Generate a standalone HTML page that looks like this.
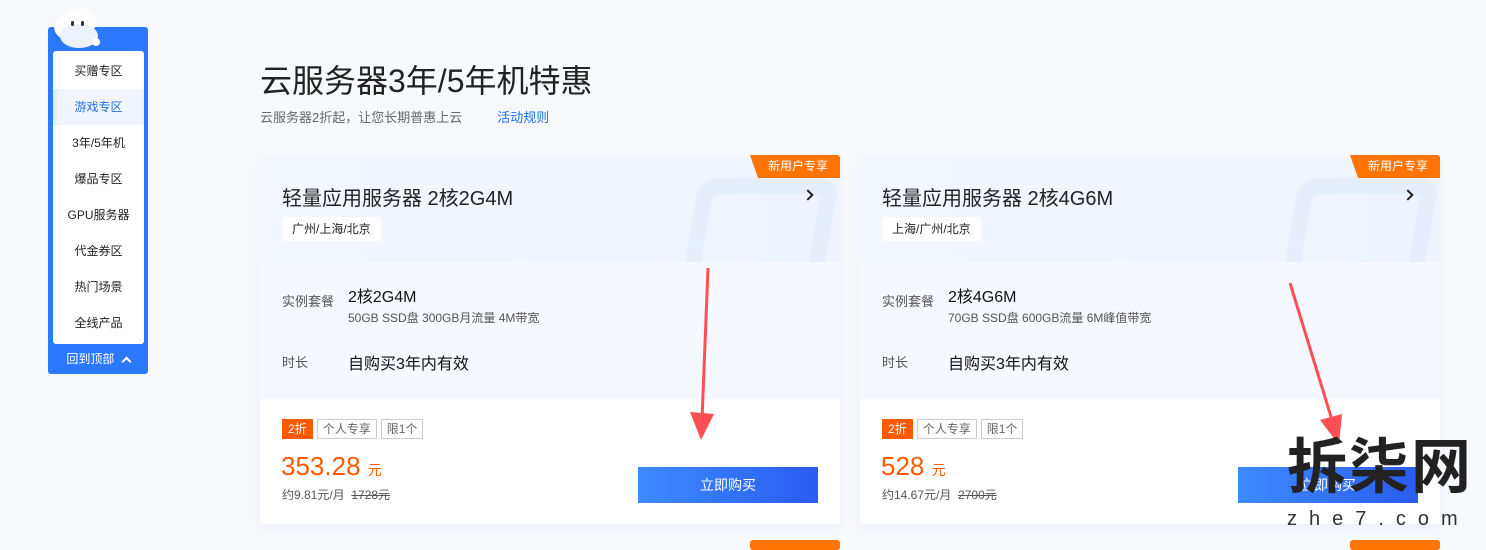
<!DOCTYPE html>
<html><head><meta charset="utf-8"><style>
*{margin:0;padding:0;box-sizing:border-box}
body{width:1486px;height:545px;overflow:hidden;background:#f7f9fd;font-family:"Liberation Sans","Noto Sans CJK SC",sans-serif;position:relative;color:#000}
.abs{position:absolute}
.side{left:48px;top:27px;width:100px;height:347px;background:#2a79ff;border-radius:3px}
.inner{left:5px;top:24px;width:91px;height:293px;background:#fff;border-radius:3px}
.it{position:absolute;left:0;width:91px;height:36px;line-height:36px;text-align:center;font-size:12px;color:#222}
.card{width:580px;height:364px;background:#fff;top:160px;box-shadow:0 2px 8px rgba(30,60,120,.05)}
.top{left:0;top:0;width:580px;height:102px;background:linear-gradient(90deg,#f2f6fe,#eef3fd);overflow:hidden}
.mid{left:0;top:102px;width:580px;height:137px;background:#f5f8fe}
.badge{top:-5px;right:0;width:90px;height:23px;background:#ff7405;color:#fff;font-size:12px;line-height:23px;text-align:center;clip-path:polygon(0 0,100% 0,100% 100%,8px 100%);padding-left:6px;border-radius:0 3px 0 0}
.tag{font-size:12px;height:20px;line-height:18px;padding:0 5px;border:1px solid #c8ccd4;color:#666;display:inline-block;margin-right:4px}
.btn{left:378px;top:307px;width:180px;height:36px;background:linear-gradient(90deg,#3d8bff,#2a5cf0);color:#fff;font-size:14px;line-height:36px;text-align:center}
</style></head><body>
<div class="abs side">
 <div class="abs inner">
  <div class="it" style="top:2px">买赠专区</div>
  <div class="it" style="top:38px;background:linear-gradient(90deg,#dce8ff 0,#f0f5ff 6px);color:#1f6fe6">游戏专区</div>
  <div class="it" style="top:74px">3年/5年机</div>
  <div class="it" style="top:110px">爆品专区</div>
  <div class="it" style="top:146px">GPU服务器</div>
  <div class="it" style="top:182px">代金券区</div>
  <div class="it" style="top:218px">热门场景</div>
  <div class="it" style="top:254px">全线产品</div>
 </div>
 <div class="abs" style="left:0;top:323px;width:100px;text-align:center;color:#fff;font-size:12px">回到顶部 <span style="display:inline-block;width:7px;height:7px;border-left:2px solid #fff;border-top:2px solid #fff;transform:rotate(45deg);margin-left:5px;position:relative;top:2px"></span></div>
</div>
<div class="abs" style="left:54px;top:14px;width:30px;height:26px;background:#fff;border-radius:50%;box-shadow:0 2px 3px rgba(0,0,0,.1)"></div>
<div class="abs" style="left:66px;top:8px;width:30px;height:28px;background:#fff;border-radius:50%"></div>
<div class="abs" style="left:60px;top:24px;width:38px;height:24px;background:#eef3fb;border-radius:50%"></div>
<div class="abs" style="left:71px;top:21px;width:3px;height:5px;background:#333;border-radius:2px"></div>
<div class="abs" style="left:81px;top:21px;width:3px;height:5px;background:#333;border-radius:2px"></div>
<div class="abs" style="left:92px;top:38px;width:8px;height:8px;background:#fff;border-radius:50%"></div>

<div class="abs" style="left:260px;top:56px;font-size:32px;color:#222">云服务器3年/5年机特惠</div>
<div class="abs" style="left:260px;top:107px;font-size:13px;color:#666">云服务器2折起，让您长期普惠上云<span style="color:#1f6fe6;margin-left:35px">活动规则</span></div>

<!-- card 1 -->
<div class="abs card" style="left:260px">
 <div class="abs top"><div class="abs" style="left:430px;top:18px;width:140px;height:110px;border:16px solid rgba(215,226,248,.35);border-radius:20px;transform:skewX(-10deg)"></div></div>
 <div class="abs mid"></div>
 <div class="abs" style="left:22px;top:22px;font-size:20px;color:#222">轻量应用服务器 2核2G4M</div>
 <div class="abs" style="left:544px;top:31px;width:8px;height:8px;border-right:2px solid #222;border-top:2px solid #222;transform:rotate(45deg)"></div>
 <div class="abs" style="left:22px;top:57px;height:24px;line-height:24px;padding:0 10px;background:#fff;font-size:12px;color:#222">广州/上海/北京</div>
 <div class="abs" style="left:22px;top:131px;font-size:13px;color:#555">实例套餐</div>
 <div class="abs" style="left:88px;top:123px;font-size:16px;color:#111">2核2G4M</div>
 <div class="abs" style="left:88px;top:149px;font-size:12px;color:#555">50GB SSD盘 300GB月流量 4M带宽</div>
 <div class="abs" style="left:22px;top:192px;font-size:13px;color:#555">时长</div>
 <div class="abs" style="left:88px;top:190px;font-size:16px;color:#111">自购买3年内有效</div>
 <div class="abs" style="left:22px;top:259px"><span class="tag" style="background:#ff5a00;border-color:#ff5a00;color:#fff">2折</span><span class="tag">个人专享</span><span class="tag">限1个</span></div>
 <div class="abs" style="left:21px;top:291px;font-size:26px;color:#ff5a00">353.28 <span style="font-size:14px">元</span></div>
 <div class="abs" style="left:22px;top:326px;font-size:12px;color:#555">约9.81元/月 &nbsp;<s>1728元</s></div>
 <div class="abs btn">立即购买</div>
 <div class="abs badge">新用户专享</div>
</div>

<!-- card 2 -->
<div class="abs card" style="left:860px">
 <div class="abs top"><div class="abs" style="left:430px;top:18px;width:140px;height:110px;border:16px solid rgba(215,226,248,.35);border-radius:20px;transform:skewX(-10deg)"></div></div>
 <div class="abs mid"></div>
 <div class="abs" style="left:22px;top:22px;font-size:20px;color:#222">轻量应用服务器 2核4G6M</div>
 <div class="abs" style="left:544px;top:31px;width:8px;height:8px;border-right:2px solid #222;border-top:2px solid #222;transform:rotate(45deg)"></div>
 <div class="abs" style="left:22px;top:57px;height:24px;line-height:24px;padding:0 10px;background:#fff;font-size:12px;color:#222">上海/广州/北京</div>
 <div class="abs" style="left:22px;top:131px;font-size:13px;color:#555">实例套餐</div>
 <div class="abs" style="left:88px;top:123px;font-size:16px;color:#111">2核4G6M</div>
 <div class="abs" style="left:88px;top:149px;font-size:12px;color:#555">70GB SSD盘 600GB流量 6M峰值带宽</div>
 <div class="abs" style="left:22px;top:192px;font-size:13px;color:#555">时长</div>
 <div class="abs" style="left:88px;top:190px;font-size:16px;color:#111">自购买3年内有效</div>
 <div class="abs" style="left:22px;top:259px"><span class="tag" style="background:#ff5a00;border-color:#ff5a00;color:#fff">2折</span><span class="tag">个人专享</span><span class="tag">限1个</span></div>
 <div class="abs" style="left:21px;top:291px;font-size:26px;color:#ff5a00">528 <span style="font-size:14px">元</span></div>
 <div class="abs" style="left:22px;top:326px;font-size:12px;color:#555">约14.67元/月 &nbsp;<s>2700元</s></div>
 <div class="abs btn">立即购买</div>
 <div class="abs badge">新用户专享</div>
</div>

<div class="abs" style="left:750px;top:540px;width:90px;height:10px;background:#ff7405;border-radius:3px"></div>
<div class="abs" style="left:1350px;top:540px;width:90px;height:10px;background:#ff7405;border-radius:3px"></div>

<svg class="abs" style="left:0;top:0" width="1486" height="545">
 <line x1="708" y1="268" x2="702" y2="420" stroke="#ff4f55" stroke-width="3"/>
 <polygon points="690,412 714,414 701,440" fill="#ff4f55"/>
 <line x1="1290" y1="283" x2="1332" y2="420" stroke="#ff4f55" stroke-width="3"/>
 <polygon points="1320,420 1342,414 1339,445" fill="#ff4f55"/>
</svg>

<div class="abs" style="left:1287px;top:436px;font-size:60px;font-weight:bold;color:#222;letter-spacing:2px;line-height:64px">拆柒网</div>
<div class="abs" style="left:1287px;top:508px;font-size:20px;color:#333;letter-spacing:12px">zhe7.com</div>
</body></html>
